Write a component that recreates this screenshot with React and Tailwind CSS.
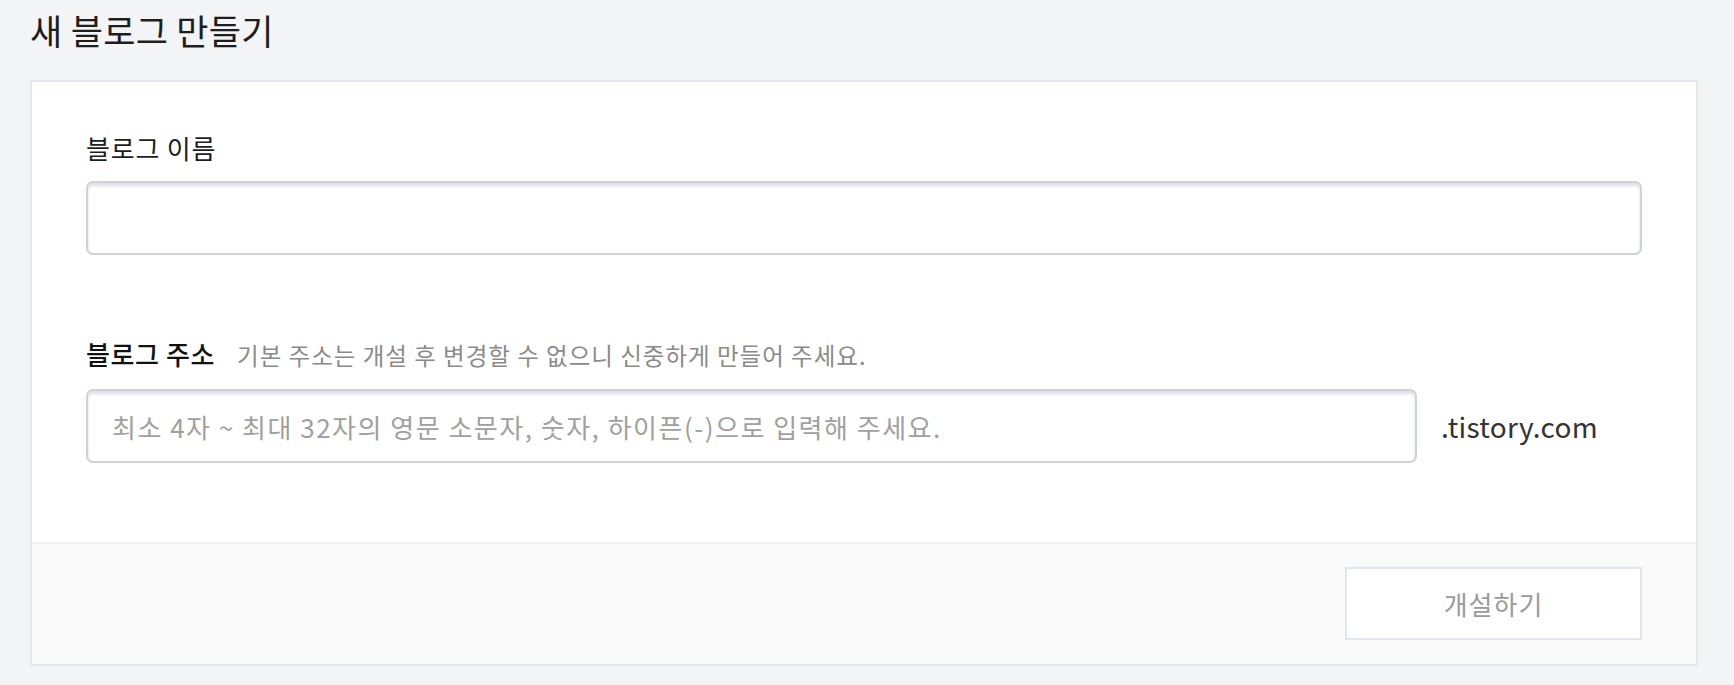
import React from 'react';

const font = { fontFamily: '"Noto Sans CJK KR", "Noto Sans", sans-serif' };

const App = () => {
  return (
    <div className="min-h-screen bg-[#f3f4f6] pl-[30px] pr-[36px]" style={font}>
      {/* page title */}
      <h1 className="h-[80px] pt-[6px] text-[35px] leading-[48px] font-normal text-[#1e1e1e] tracking-[0.3px]">
        새 블로그 만들기
      </h1>

      <div className="bg-white border-2 border-[#e3e6ee]">
        <div className="px-[54px] pt-[48px] pb-[79px]">
          {/* blog name */}
          <label className="block text-[26px] leading-[36px] text-[#1e1e1e] tracking-[0.8px]">블로그 이름</label>
          <input
            type="text"
            className="mt-[15px] block w-full h-[74px] px-[24px] rounded-[7px] border-2 border-[#cfd2db] shadow-[inset_0_3px_3px_rgba(0,0,0,0.12)] outline-none text-[25px]"
          />

          {/* blog address */}
          <div className="mt-[81px] flex items-baseline gap-[22px]">
            <span className="text-[26px] leading-[36px] font-medium text-[#111] tracking-[0.6px]">블로그 주소</span>
            <span className="text-[23.5px] leading-[36px] text-[#8a8a8a] tracking-[1px]">
              기본 주소는 개설 후 변경할 수 없으니 신중하게 만들어 주세요.
            </span>
          </div>
          <div className="mt-[16px] flex items-center">
            <input
              type="text"
              placeholder="최소 4자 ~ 최대 32자의 영문 소문자, 숫자, 하이픈(-)으로 입력해 주세요."
              className="flex-1 min-w-0 h-[74px] px-[24px] rounded-[7px] border-2 border-[#cfd2db] shadow-[inset_0_3px_3px_rgba(0,0,0,0.12)] outline-none text-[26px] tracking-[1.5px] placeholder:text-[#a0a0a0]"
            />
            <span className="w-[225px] pl-[24px] text-[28px] text-[#333] tracking-[0.3px]">.tistory.com</span>
          </div>
        </div>

        {/* footer */}
        <div className="bg-[#fafafa] border-t-2 border-[#f0f1f4] flex justify-end px-[54px] pt-[23px] pb-[24px]">
          <button className="w-[297px] h-[73px] bg-white border-2 border-[#e2e5ed] text-[26px] text-[#9a9a9a] tracking-[1px]">
            개설하기
          </button>
        </div>
      </div>
    </div>
  );
};

export default App;
